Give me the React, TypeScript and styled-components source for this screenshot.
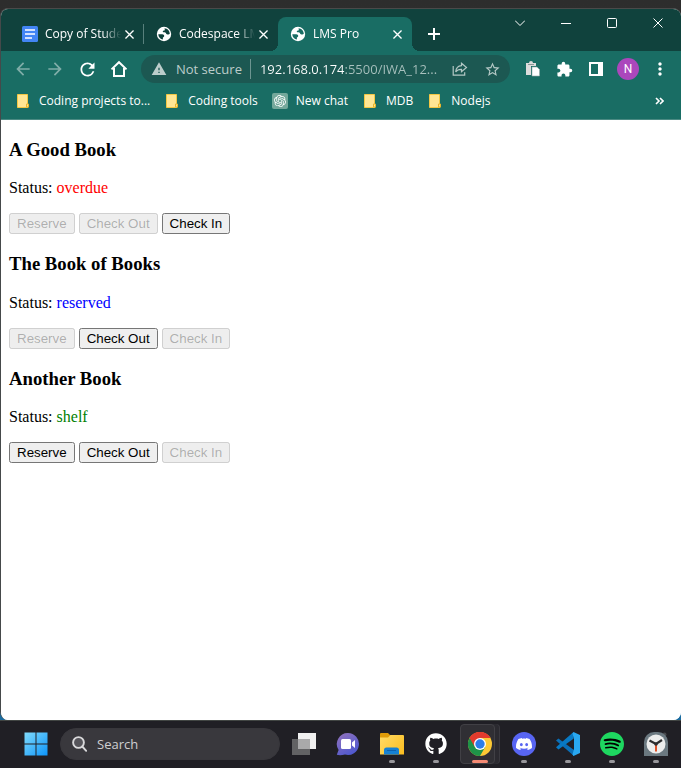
import React from "react";
import styled, { createGlobalStyle, css } from "styled-components";
import {
  MdArrowBack,
  MdArrowForward,
  MdRefresh,
  MdWarning,
  MdStarBorder,
  MdExtension,
  MdMoreVert,
} from "react-icons/md";
import { FaGithub } from "react-icons/fa";
import { SiOpenai, SiDiscord, SiSpotify } from "react-icons/si";

const uiFont = `"Open Sans", "Noto Sans", sans-serif`;

const GlobalStyle = createGlobalStyle`
  * { box-sizing: border-box; }
  body { margin: 0; background: #2d2d2d; }
`;

const Desktop = styled.div`
  min-height: 100vh;
  display: flex;
  flex-direction: column;
  padding-top: 8px;
  background: linear-gradient(#2d2d2d 0, #3c3c3c 80%, #1b6ca0 92%);
`;

const BrowserWindow = styled.div`
  flex: 1;
  display: flex;
  flex-direction: column;
  border-left: 1px solid #45494a;
  border-top: 1px solid #4a4a4a;
  border-radius: 8px;
  overflow: hidden;
  background: #fff;
`;

const bareButton = css`
  border: 0;
  padding: 0;
  background: none;
  color: inherit;
  font: inherit;
  display: flex;
  align-items: center;
  justify-content: center;
  flex: none;
`;

/* ---------- tab strip ---------- */

const TabStrip = styled.div`
  height: 42px;
  display: flex;
  align-items: flex-end;
  padding-left: 9px;
  background: #10423d;
  color: #fff;
  font: 12px/16px ${uiFont};
`;

const Tab = styled.div<{ $active?: boolean; $divider?: boolean }>`
  position: relative;
  flex: 0 1 134px;
  min-width: 0;
  height: 34px;
  display: flex;
  align-items: center;
  padding: 0 7px 0 12px;
  border-radius: 8px 8px 0 0;
  background: ${(p) => (p.$active ? "#196d64" : "transparent")};

  ${(p) =>
    p.$divider &&
    css`
      &::after {
        content: "";
        position: absolute;
        right: 0;
        top: 7px;
        width: 1px;
        height: 20px;
        background: #58807c;
      }
    `}

  ${(p) =>
    p.$active &&
    css`
      &::before,
      &::after {
        content: "";
        position: absolute;
        bottom: 0;
        width: 8px;
        height: 8px;
      }
      &::before {
        right: 100%;
        background: radial-gradient(circle at 0 0, transparent 8px, #196d64 8px);
      }
      &::after {
        left: 100%;
        background: radial-gradient(circle at 100% 0, transparent 8px, #196d64 8px);
      }
    `}
`;

const TabTitle = styled.button`
  ${bareButton}
  flex: 1;
  min-width: 0;
  gap: 7px;
  justify-content: flex-start;

  svg {
    flex: none;
  }
`;

const TabLabel = styled.span`
  flex: 1;
  overflow: hidden;
  white-space: nowrap;
  text-align: left;
  mask-image: linear-gradient(to right, #000 76%, transparent);
`;

const TabClose = styled.button`
  ${bareButton}
  width: 16px;
  height: 16px;
`;

const NewTab = styled.button`
  ${bareButton}
  width: 28px;
  height: 34px;
  margin-left: 8px;
`;

const WindowControls = styled.div`
  display: flex;
  align-self: flex-start;
  margin-left: auto;
`;

const WindowButton = styled.button`
  ${bareButton}
  width: 46px;
  height: 28px;
`;

/* ---------- toolbar ---------- */

const Toolbar = styled.div`
  height: 36px;
  display: flex;
  align-items: center;
  padding: 0 5px 0 6px;
  background: #196d64;
  color: #fff;
`;

const ToolButton = styled.button<{ $dim?: boolean }>`
  ${bareButton}
  width: 32px;
  height: 32px;
  color: ${(p) => (p.$dim ? "#7fada8" : "#fff")};
`;

const Omnibox = styled.div`
  flex: 1;
  min-width: 0;
  height: 28px;
  margin: 0 6px;
  padding: 0 2px 0 10px;
  display: flex;
  align-items: center;
  border-radius: 14px;
  background: #1c5852;
  color: #b9cbc9;
  font: 13px/20px ${uiFont};
`;

const Security = styled.button`
  ${bareButton}
  gap: 9px;
  padding-right: 8px;
  color: #bccdcb;
`;

const Address = styled.input`
  flex: 1;
  min-width: 0;
  height: 20px;
  padding: 0 0 0 9px;
  border: 0;
  border-left: 1px solid #6d9591;
  outline: 0;
  font: inherit;
  text-overflow: ellipsis;
  background: linear-gradient(to right, #fff 93px, #a9c1be 93px);
  background-clip: text;
  -webkit-text-fill-color: transparent;
`;

const BoxButton = styled(ToolButton)`
  color: #b4c8c5;
  height: 28px;
`;

const Avatar = styled.span`
  width: 22px;
  height: 22px;
  border-radius: 50%;
  background: #ab47bc;
  color: #fff;
  font: 12px/22px Roboto, sans-serif;
  text-align: center;
`;

/* ---------- bookmarks ---------- */

const Bookmarks = styled.nav`
  height: 33px;
  display: flex;
  align-items: center;
  gap: 14px;
  padding: 0 17px 4px 14px;
  border-bottom: 1px solid #4b8a83;
  background: #196d64;
  color: #fff;
  font: 12px/16px ${uiFont};
  white-space: nowrap;
`;

const Bookmark = styled.a`
  display: flex;
  align-items: center;
  gap: 8px;
  color: inherit;
  text-decoration: none;
`;

const ChatBadge = styled.span`
  width: 16px;
  height: 16px;
  display: flex;
  align-items: center;
  justify-content: center;
  border-radius: 2px;
  background: #74a89b;
`;

const Overflow = styled.button`
  ${bareButton}
  margin-left: auto;
`;

/* ---------- page ---------- */

const Page = styled.main`
  flex: 1;
  display: flow-root;
  padding: 0 8px;
  background: #fff;
  color: #000;
  font-family: "Liberation Serif", serif;
`;

const Status = styled.span<{ $color: string }>`
  color: ${(p) => p.$color};
`;

const ActionButton = styled.button`
  font-family: "Liberation Sans", sans-serif;
`;

/* ---------- taskbar ---------- */

const Taskbar = styled.footer`
  height: 48px;
  display: flex;
  align-items: center;
  padding: 0 3px 2px 18px;
  border-top: 1px solid #414543;
  background: #201f25;
  color: #d4d4d6;
  font: 14px/20px ${uiFont};
`;

const TaskButton = styled.button<{ $active?: boolean; $running?: boolean }>`
  ${bareButton}
  position: relative;
  width: 44px;
  height: 48px;

  svg {
    position: relative;
  }

  ${(p) =>
    p.$active &&
    css`
      &::before {
        content: "";
        position: absolute;
        inset: 4px 7px 4px 2px;
        border: 1px solid #414045;
        border-radius: 4px;
        background: #302f34;
        box-shadow: 4px 0 0 #2b2a30, 5px 0 0 #3a393f;
      }
    `}

  ${(p) =>
    (p.$running || p.$active) &&
    css`
      &::after {
        content: "";
        position: absolute;
        bottom: 5px;
        width: ${p.$active ? "16px" : "6px"};
        height: 3px;
        border-radius: 2px;
        background: ${p.$active ? "#f58a74" : "#98979b"};
      }
    `}
`;

const StartButton = styled(TaskButton)`
  width: 36px;
`;

const SearchBox = styled.label`
  flex: 0 1 220px;
  min-width: 0;
  height: 32px;
  margin: 0 2px 0 6px;
  padding: 0 11px;
  display: flex;
  align-items: center;
  gap: 10px;
  border: 1px solid #38373c;
  border-radius: 16px;
  background: #39383d;
`;

const SearchInput = styled.input`
  flex: 1;
  min-width: 0;
  padding: 0;
  border: 0;
  outline: 0;
  background: none;
  color: inherit;
  font: 13px/20px ${uiFont};

  &::placeholder {
    color: #cfcfd1;
    opacity: 1;
  }
`;

const TaskApps = styled.div`
  display: flex;
`;

/* ---------- icons ---------- */

const DocsIcon = () => (
  <svg width="16" height="16" viewBox="0 0 16 16">
    <rect width="16" height="16" rx="1.5" fill="#4285f4" />
    <path d="M3 4h10M3 8h10M3 12h7" stroke="#fff" strokeWidth="1.6" />
  </svg>
);

const GlobeIcon = ({ sea = "#10423d" }: { sea?: string }) => (
  <svg width="16" height="16" viewBox="0 0 16 16">
    <circle cx="8" cy="8" r="7.2" fill="#fff" />
    <path
      d="M8.500 2.200C11.500 2.400 13.700 4.800 13.800 7.800C13.200 8.600 12.400 8.700 11.600 8.500C10.500 8.300 10.200 7.600 9.800 6.900C9.300 6.200 8.300 6.300 7.400 6.200C6.700 6 6.600 5.200 7.200 4.800L8.900 4.200Z"
      fill={sea}
    />
    <path
      d="M2.300 8.200H6.200C7.500 8.300 8.200 9 8.200 10C8.200 10.900 7.400 11.200 6.900 11.600V13.600C4.300 13.200 2.300 10.900 2.300 8.200Z"
      fill={sea}
    />
  </svg>
);

const CrossIcon = ({ size = 9, stroke = 1.5 }: { size?: number; stroke?: number }) => (
  <svg width={size} height={size} viewBox="0 0 10 10" stroke="#fff" strokeWidth={stroke}>
    <path d="M.5 .5l9 9M9.500 .5l-9 9" />
  </svg>
);

const FolderIcon = () => (
  <svg width="16" height="16" viewBox="0 0 16 16">
    <path d="M2.500 1.500h10v9.500h.5v3.500h-10.500z" fill="#ffe694" stroke="#f3c744" />
    <path d="M11.500 14v-3h2v3z" fill="#ffe694" stroke="#e9b52c" />
  </svg>
);

const HomeIcon = () => (
  <svg width="18" height="18" viewBox="0 0 18 18" fill="none" stroke="#fff" strokeWidth="2">
    <path d="M1.500 9.400L9 2.200l7.500 7.200M4 8v8h10V8" />
  </svg>
);

const ShareIcon = () => (
  <svg width="16" height="16" viewBox="0 0 16 16" fill="none" stroke="currentColor" strokeWidth="1.2">
    <path d="M1.200 5v9.200h11.500v-3" />
    <path d="M9.500 2.200l5 4.300-5 4.300V8.300C7 8.200 5 9 3.700 11C4 7.500 6 4.900 9.500 4.700z" />
  </svg>
);

const StartIcon = () => (
  <svg width="24" height="24" viewBox="0 0 24 24">
    <defs>
      <linearGradient id="start" x1="0" y1="0" x2="24" y2="24" gradientUnits="userSpaceOnUse">
        <stop stopColor="#83dcfb" />
        <stop offset="1" stopColor="#0a93fa" />
      </linearGradient>
    </defs>
    <path d="M.5 .5h11v11H.5zM12.500 .5h11v11h-11zM.5 12.500h11v11H.5zM12.500 12.500h11v11h-11z" fill="url(#start)" />
  </svg>
);

const SearchIcon = () => (
  <svg width="15" height="16" viewBox="0 0 15 16" fill="none" stroke="#d9d9db" strokeWidth="1.900">
    <circle cx="6.500" cy="6.500" r="5.400" fill="#55545a" />
    <path d="M10.300 10.500l3.900 4.300" strokeLinecap="round" />
  </svg>
);

const TaskViewIcon = () => (
  <svg width="24" height="24" viewBox="0 0 24 24">
    <rect x="6" y="1" width="18" height="16" fill="#f0f0f0" />
    <rect x="0" y="7" width="18" height="16" fill="#626264" />
    <rect x="6" y="7" width="12" height="10" fill="#a9a9aa" />
  </svg>
);

const MeetIcon = () => (
  <svg width="24" height="24" viewBox="0 0 24 24">
    <defs>
      <linearGradient id="meet" x1="4" y1="2" x2="16" y2="22" gradientUnits="userSpaceOnUse">
        <stop stopColor="#8d70bd" />
        <stop offset="1" stopColor="#5059cf" />
      </linearGradient>
    </defs>
    <path d="M12 1a11 11 0 1 1-3 21.600C6 23.300 3 23.500.8 22.800L2.600 18A11 11 0 0 1 12 1z" fill="url(#meet)" />
    <rect x="5" y="7" width="10" height="10" rx="1.500" fill="#fff" />
    <path d="M16 10.500l3-2.500v8l-3-2.500z" fill="#fff" />
  </svg>
);

const ExplorerIcon = () => (
  <svg width="24" height="24" viewBox="0 0 24 24">
    <defs>
      <linearGradient id="folder" x1="0" y1="4" x2="24" y2="22" gradientUnits="userSpaceOnUse">
        <stop stopColor="#ffdb66" />
        <stop offset="1" stopColor="#fbbd20" />
      </linearGradient>
    </defs>
    <path d="M0 2a1 1 0 0 1 1-1h7l2 2h13v6H0z" fill="#e09b08" />
    <path d="M0 5.500h8l2.500-2.500H23a1 1 0 0 1 1 1v18.500H0z" fill="url(#folder)" />
    <path d="M4 22.500V18a2.500 2.500 0 0 1 2.500-2.500h10A2.500 2.500 0 0 1 19 18v4.500z" fill="#1681d2" />
    <path d="M7 18.500h9" stroke="#0c61ad" />
  </svg>
);

const ChromeIcon = () => (
  <svg width="24" height="24" viewBox="0 0 24 24">
    <circle cx="12" cy="12" r="12" fill="#fcc934" />
    <path d="M12 12L1.600 6A12 12 0 0 1 22.400 6H12z" fill="#e33b2e" />
    <path d="M12 12L1.600 6A12 12 0 0 0 12 24L17.200 15z" fill="#1e9348" />
    <path d="M1.600 6L6.800 15L12 6H22.400A12 12 0 0 0 1.600 6z" fill="#e33b2e" />
    <circle cx="12" cy="12" r="6" fill="#fff" />
    <circle cx="12" cy="12" r="4.700" fill="#2b7de9" />
  </svg>
);

const DiscordIcon = () => (
  <svg width="24" height="24" viewBox="0 0 24 24">
    <circle cx="12" cy="12" r="12" fill="#5865f2" />
    <SiDiscord x="4" y="4" size={16} color="#fff" />
  </svg>
);

const CodeIcon = () => (
  <svg width="24" height="24" viewBox="0 0 24 24">
    <path d="M0 8.600l2.400-2L18 18v6z" fill="#0a6fb8" />
    <path d="M0 15.300L17.500 0v6.800L2.400 17.400z" fill="#0879c4" />
    <path d="M17.500 0L24 3v18l-6.500 3-1-1.500L18 17V7l-1.500-5.500z" fill="#29a8f1" />
  </svg>
);

const SpotifyIcon = () => (
  <svg width="24" height="24" viewBox="0 0 24 24">
    <circle cx="12" cy="12" r="11" fill="#000" />
    <SiSpotify size={24} color="#1ed760" />
  </svg>
);

const ClockIcon = () => (
  <svg width="24" height="24" viewBox="0 0 24 24">
    <circle cx="20.500" cy="2.500" r="2" fill="#47484c" />
    <path d="M0 24V10A10 10 0 0 1 10 0h4a10 10 0 0 1 10 10v14z" fill="#6b7880" />
    <circle cx="12" cy="12" r="9.500" fill="#ececec" />
    <path d="M5.500 8.500L12 12l6-4" fill="none" stroke="#2c2c2e" strokeWidth="2.200" />
    <path d="M12 13v6.500" stroke="#e05128" strokeWidth="2" />
    <circle cx="12" cy="12" r="1.800" fill="#2c2c2e" />
  </svg>
);

/* ---------- data ---------- */

type Action = "Reserve" | "Check Out" | "Check In";
const actions: Action[] = ["Reserve", "Check Out", "Check In"];

const books: { title: string; status: string; color: string; enabled: Action[] }[] = [
  { title: "A Good Book", status: "overdue", color: "red", enabled: ["Check In"] },
  { title: "The Book of Books", status: "reserved", color: "blue", enabled: ["Check Out"] },
  { title: "Another Book", status: "shelf", color: "green", enabled: ["Reserve", "Check Out"] },
];

const tabs = [
  { label: "Copy of Stude", icon: <DocsIcon />, divider: true },
  { label: "Codespace LM", icon: <GlobeIcon /> },
  { label: "LMS Pro", icon: <GlobeIcon sea="#196d64" />, active: true },
];

const bookmarks = [
  { label: "Coding projects to...", icon: <FolderIcon /> },
  { label: "Coding tools", icon: <FolderIcon /> },
  { label: "New chat", icon: <ChatBadge><SiOpenai size={12} /></ChatBadge> },
  { label: "MDB", icon: <FolderIcon /> },
  { label: "Nodejs", icon: <FolderIcon /> },
];

const apps = [
  { name: "Task view", icon: <TaskViewIcon /> },
  { name: "Chat", icon: <MeetIcon /> },
  { name: "File Explorer", icon: <ExplorerIcon />, running: true },
  { name: "GitHub", icon: <FaGithub size={22} color="#fff" />, running: true },
  { name: "Chrome", icon: <ChromeIcon />, active: true },
  { name: "Discord", icon: <DiscordIcon />, running: true },
  { name: "Visual Studio Code", icon: <CodeIcon />, running: true },
  { name: "Spotify", icon: <SpotifyIcon />, running: true },
  { name: "Clock", icon: <ClockIcon />, running: true },
];

export default function App() {
  return (
    <Desktop>
      <GlobalStyle />
      <BrowserWindow>
        <TabStrip>
          {tabs.map((t) => (
            <Tab key={t.label} $active={t.active} $divider={t.divider}>
              <TabTitle>
                {t.icon}
                <TabLabel>{t.label}</TabLabel>
              </TabTitle>
              <TabClose aria-label={`Close ${t.label}`}>
                <CrossIcon />
              </TabClose>
            </Tab>
          ))}
          <NewTab aria-label="New tab">
            <svg width="12" height="12" viewBox="0 0 12 12" stroke="#fff" strokeWidth="2">
              <path d="M6 0v12M0 6h12" />
            </svg>
          </NewTab>
          <WindowControls>
            <WindowButton aria-label="Search tabs">
              <svg width="10" height="6" viewBox="0 0 10 6" fill="none" stroke="#fff">
                <path d="M0 .5l5 5 5-5" />
              </svg>
            </WindowButton>
            <WindowButton aria-label="Minimize">
              <svg width="10" height="2" viewBox="0 0 10 2">
                <path d="M0 1h10v1H0z" fill="#fff" />
              </svg>
            </WindowButton>
            <WindowButton aria-label="Maximize">
              <svg width="10" height="10" viewBox="0 0 10 10" fill="none" stroke="#fff">
                <rect x=".5" y=".5" width="9" height="9" rx="1" />
              </svg>
            </WindowButton>
            <WindowButton aria-label="Close window">
              <CrossIcon size={10} stroke={1} />
            </WindowButton>
          </WindowControls>
        </TabStrip>

        <Toolbar>
          <ToolButton $dim aria-label="Back"><MdArrowBack size={20} /></ToolButton>
          <ToolButton $dim aria-label="Forward"><MdArrowForward size={20} /></ToolButton>
          <ToolButton aria-label="Reload"><MdRefresh size={21} /></ToolButton>
          <ToolButton aria-label="Home"><HomeIcon /></ToolButton>
          <Omnibox>
            <Security>
              <MdWarning size={16} />
              Not secure
            </Security>
            <Address aria-label="Address" defaultValue="192.168.0.174:5500/IWA_12..." />
            <BoxButton aria-label="Share"><ShareIcon /></BoxButton>
            <BoxButton aria-label="Bookmark this page"><MdStarBorder size={17} /></BoxButton>
          </Omnibox>
          <ToolButton aria-label="Clipboard">
            <svg width="15" height="16" viewBox="0 0 15 16">
              <path d="M1 2h3a2 2 0 0 1 4 0h3v3H6v9H1z" fill="#dcdcdc" />
              <path d="M3 3.500h6" stroke="#8a9a98" />
              <path d="M7 6h5l2.500 2.500V15H7z" fill="#fff" stroke="#9aa" strokeWidth=".6" />
            </svg>
          </ToolButton>
          <ToolButton aria-label="Extensions"><MdExtension size={17} /></ToolButton>
          <ToolButton aria-label="Side panel">
            <svg width="14" height="14" viewBox="0 0 14 14">
              <path d="M0 0h14v14H0zM2 2v10h7V2z" fill="#fff" fillRule="evenodd" />
            </svg>
          </ToolButton>
          <ToolButton aria-label="Profile"><Avatar>N</Avatar></ToolButton>
          <ToolButton aria-label="Menu"><MdMoreVert size={20} /></ToolButton>
        </Toolbar>

        <Bookmarks>
          {bookmarks.map((b) => (
            <Bookmark key={b.label} href="#">
              {b.icon}
              {b.label}
            </Bookmark>
          ))}
          <Overflow aria-label="More bookmarks">
            <svg width="9" height="8" viewBox="0 0 9 8" fill="none" stroke="#fff" strokeWidth="1.600">
              <path d="M1 1l3 3-3 3M5 1l3 3-3 3" />
            </svg>
          </Overflow>
        </Bookmarks>

        <Page>
          {books.map((b) => (
            <section key={b.title}>
              <h3>{b.title}</h3>
              <p>
                Status: <Status $color={b.color}>{b.status}</Status>
              </p>
              {actions.map((a) => (
                <React.Fragment key={a}>
                  <ActionButton disabled={!b.enabled.includes(a)}>{a}</ActionButton>{" "}
                </React.Fragment>
              ))}
            </section>
          ))}
        </Page>
      </BrowserWindow>

      <Taskbar>
        <StartButton aria-label="Start"><StartIcon /></StartButton>
        <SearchBox>
          <SearchIcon />
          <SearchInput aria-label="Search" placeholder="Search" />
        </SearchBox>
        <TaskApps>
          {apps.map((a) => (
            <TaskButton key={a.name} aria-label={a.name} $active={a.active} $running={a.running}>
              {a.icon}
            </TaskButton>
          ))}
        </TaskApps>
      </Taskbar>
    </Desktop>
  );
}
